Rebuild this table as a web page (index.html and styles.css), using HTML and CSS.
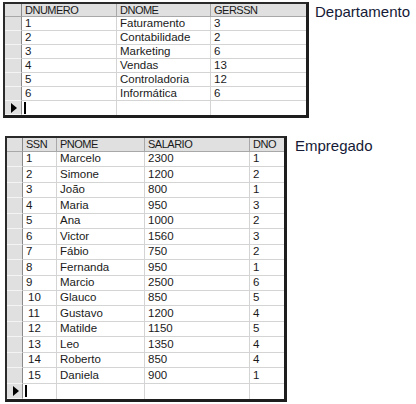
FILE: index.html
```html
<!DOCTYPE html>
<html>
<head>
<meta charset="utf-8">
<link rel="stylesheet" href="styles.css">
</head>
<body>
<div class="section dep">
  <div class="grid grid-dep">
    <div class="sel hdr"></div><div class="hc">DNUMERO</div><div class="hc">DNOME</div><div class="hc last">GERSSN</div>
    <div class="sel"></div><div class="c">1</div><div class="c">Faturamento</div><div class="c last">3</div>
    <div class="sel"></div><div class="c">2</div><div class="c">Contabilidade</div><div class="c last">2</div>
    <div class="sel"></div><div class="c">3</div><div class="c">Marketing</div><div class="c last">6</div>
    <div class="sel"></div><div class="c">4</div><div class="c">Vendas</div><div class="c last">13</div>
    <div class="sel"></div><div class="c">5</div><div class="c">Controladoria</div><div class="c last">12</div>
    <div class="sel"></div><div class="c">6</div><div class="c">Informática</div><div class="c last">6</div>
    <div class="sel cur bottom"><span class="tri"></span></div><div class="c bottom"><span class="caret"></span></div><div class="c bottom"></div><div class="c last bottom"></div>
  </div>
  <div class="label">Departamento</div>
</div>

<div class="section emp">
  <div class="grid grid-emp">
    <div class="sel hdr"></div><div class="hc">SSN</div><div class="hc">PNOME</div><div class="hc">SALARIO</div><div class="hc last">DNO</div>
    <div class="sel"></div><div class="c">1</div><div class="c">Marcelo</div><div class="c">2300</div><div class="c last">1</div>
    <div class="sel"></div><div class="c">2</div><div class="c">Simone</div><div class="c">1200</div><div class="c last">2</div>
    <div class="sel"></div><div class="c">3</div><div class="c">João</div><div class="c">800</div><div class="c last">1</div>
    <div class="sel"></div><div class="c">4</div><div class="c">Maria</div><div class="c">950</div><div class="c last">3</div>
    <div class="sel"></div><div class="c">5</div><div class="c">Ana</div><div class="c">1000</div><div class="c last">2</div>
    <div class="sel"></div><div class="c">6</div><div class="c">Victor</div><div class="c">1560</div><div class="c last">3</div>
    <div class="sel"></div><div class="c">7</div><div class="c">Fábio</div><div class="c">750</div><div class="c last">2</div>
    <div class="sel"></div><div class="c">8</div><div class="c">Fernanda</div><div class="c">950</div><div class="c last">1</div>
    <div class="sel"></div><div class="c">9</div><div class="c">Marcio</div><div class="c">2500</div><div class="c last">6</div>
    <div class="sel"></div><div class="c two">10</div><div class="c">Glauco</div><div class="c">850</div><div class="c last">5</div>
    <div class="sel"></div><div class="c two">11</div><div class="c">Gustavo</div><div class="c">1200</div><div class="c last">4</div>
    <div class="sel"></div><div class="c two">12</div><div class="c">Matilde</div><div class="c">1150</div><div class="c last">5</div>
    <div class="sel"></div><div class="c two">13</div><div class="c">Leo</div><div class="c">1350</div><div class="c last">4</div>
    <div class="sel"></div><div class="c two">14</div><div class="c">Roberto</div><div class="c">850</div><div class="c last">4</div>
    <div class="sel"></div><div class="c two">15</div><div class="c">Daniela</div><div class="c">900</div><div class="c last">1</div>
    <div class="sel cur bottom"><span class="tri"></span></div><div class="c bottom"><span class="caret"></span></div><div class="c bottom"></div><div class="c bottom"></div><div class="c last bottom"></div>
  </div>
  <div class="label">Empregado</div>
</div>
</body>
</html>
```

FILE: styles.css
```css
html, body {
  margin: 0;
  padding: 0;
  background: #ffffff;
}
body {
  width: 416px;
  height: 404px;
  overflow: hidden;
  font-family: "Liberation Sans", Arial, sans-serif;
  color: #111;
}
.section {
  display: flex;
  align-items: flex-start;
}
.dep {
  padding: 2px 0 0 3px;
}
.emp {
  padding: 18px 0 0 5px;
}
.grid {
  display: grid;
  border-top: 2px solid #2a2a2a;
  border-left: 2px solid #2a2a2a;
  border-right: 3px solid #1e1e1e;
  border-bottom: 3px solid #1e1e1e;
  background: #fff;
  font-size: 11.5px;
  line-height: 1;
}
.grid-dep {
  grid-template-columns: 17px 95px 94px 95px;
  grid-template-rows: 13px repeat(7, 14px);
}
.grid-emp {
  grid-template-columns: 16px 34px 88px 105px 34px;
  grid-template-rows: 14px repeat(16, 15.45px);
}
.grid > div {
  box-sizing: border-box;
  border-right: 1px solid #d4d4d4;
  border-bottom: 1px solid #d4d4d4;
  overflow: hidden;
  white-space: nowrap;
  display: flex;
  align-items: center;
}
.grid > .last {
  border-right: none;
}
.grid > .bottom {
  border-bottom: none;
}
.grid > .sel {
  background: #e0e0e0;
  border-right: 1px solid #8a8a8a;
  border-bottom: 1px solid #f4f4f4;
}
.grid > .sel.hdr {
  border-bottom: 1px solid #a8a8a8;
}
.grid > .hc {
  background: #e0e0e0;
  border-right: 1px solid #a8a8a8;
  border-bottom: 1px solid #a8a8a8;
  padding-left: 3px;
  font-size: 11px;
  letter-spacing: -0.5px;
  color: #1a1a1a;
}
.grid > .hc.last {
  border-right: none;
}
.grid > .c {
  padding-left: 3px;
  color: #1a1a1a;
}
.grid > .c.two {
  padding-left: 5px;
}
.tri {
  width: 0;
  height: 0;
  border-top: 5px solid transparent;
  border-bottom: 5px solid transparent;
  border-left: 6px solid #000;
  margin-left: 6px;
}
.caret {
  width: 2px;
  height: 12px;
  background: #000;
  margin-left: -1px;
}
.label {
  font-family: "Liberation Sans", Arial, sans-serif;
  font-size: 15px;
  color: #151a36;
  line-height: 1;
}
.dep .label {
  margin-left: 6px;
  margin-top: 2px;
}
.emp .label {
  margin-left: 8px;
  margin-top: 2px;
}
```
